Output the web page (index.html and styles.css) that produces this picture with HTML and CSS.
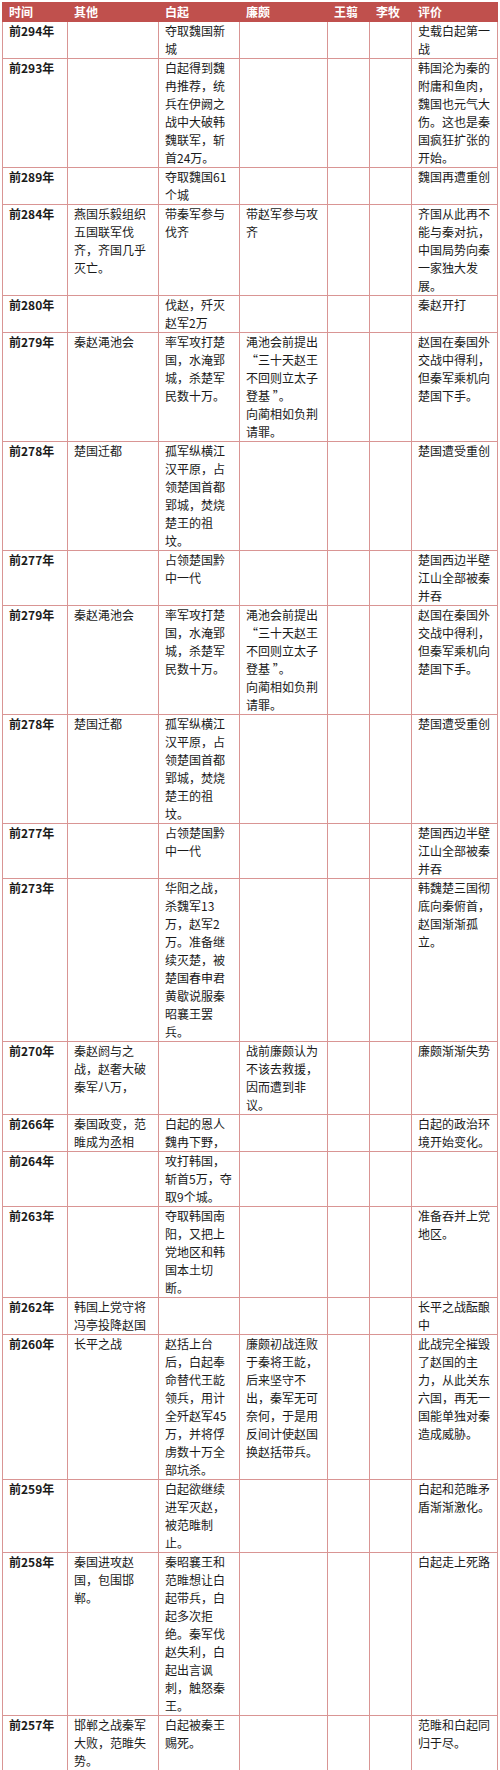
FILE: index.html
```html
<!DOCTYPE html>
<html lang="zh-CN">
<head>
<meta charset="utf-8">
<title>白起年表</title>
<link rel="stylesheet" href="styles.css">
</head>
<body>
<table class="chron">
  <colgroup>
    <col class="c-time">
    <col class="c-other">
    <col class="c-bai">
    <col class="c-lian">
    <col class="c-wang">
    <col class="c-li">
    <col class="c-eval">
  </colgroup>
  <thead>
    <tr>
      <th>时间</th><th>其他</th><th>白起</th><th>廉颇</th><th>王翦</th><th>李牧</th><th>评价</th>
    </tr>
  </thead>
  <tbody>
    <tr>
      <td class="year">前294年</td><td></td><td>夺取魏国新城</td><td></td><td></td><td></td><td>史载白起第一战</td>
    </tr>
    <tr>
      <td class="year">前293年</td><td></td><td>白起得到魏冉推荐，统兵在伊阙之战中大破韩魏联军，斩首24万。</td><td></td><td></td><td></td><td>韩国沦为秦的附庸和鱼肉，魏国也元气大伤。这也是秦国疯狂扩张的开始。</td>
    </tr>
    <tr>
      <td class="year">前289年</td><td></td><td>夺取魏国61个城</td><td></td><td></td><td></td><td>魏国再遭重创</td>
    </tr>
    <tr>
      <td class="year">前284年</td><td>燕国乐毅组织五国联军伐齐，齐国几乎灭亡。</td><td>带秦军参与伐齐</td><td>带赵军参与攻齐</td><td></td><td></td><td>齐国从此再不能与秦对抗，中国局势向秦一家独大发展。</td>
    </tr>
    <tr>
      <td class="year">前280年</td><td></td><td>伐赵，歼灭赵军2万</td><td></td><td></td><td></td><td>秦赵开打</td>
    </tr>
    <tr>
      <td class="year">前279年</td><td>秦赵渑池会</td><td>率军攻打楚国，水淹郢城，杀楚军民数十万。</td><td>渑池会前提出<br>“三十天赵王不回则立太子登基 ”。<br>向蔺相如负荆请罪。</td><td></td><td></td><td>赵国在秦国外交战中得利，但秦军乘机向楚国下手。</td>
    </tr>
    <tr>
      <td class="year">前278年</td><td>楚国迁都</td><td>孤军纵横江汉平原，占领楚国首都郢城，焚烧楚王的祖坟。</td><td></td><td></td><td></td><td>楚国遭受重创</td>
    </tr>
    <tr>
      <td class="year">前277年</td><td></td><td>占领楚国黔中一代</td><td></td><td></td><td></td><td>楚国西边半壁江山全部被秦并吞</td>
    </tr>
    <tr>
      <td class="year">前279年</td><td>秦赵渑池会</td><td>率军攻打楚国，水淹郢城，杀楚军民数十万。</td><td>渑池会前提出<br>“三十天赵王不回则立太子登基 ”。<br>向蔺相如负荆请罪。</td><td></td><td></td><td>赵国在秦国外交战中得利，但秦军乘机向楚国下手。</td>
    </tr>
    <tr>
      <td class="year">前278年</td><td>楚国迁都</td><td>孤军纵横江汉平原，占领楚国首都郢城，焚烧楚王的祖坟。</td><td></td><td></td><td></td><td>楚国遭受重创</td>
    </tr>
    <tr>
      <td class="year">前277年</td><td></td><td>占领楚国黔中一代</td><td></td><td></td><td></td><td>楚国西边半壁江山全部被秦并吞</td>
    </tr>
    <tr>
      <td class="year">前273年</td><td></td><td>华阳之战，杀魏军13万，赵军2万。准备继续灭楚，被楚国春申君黄歇说服秦昭襄王罢兵。</td><td></td><td></td><td></td><td>韩魏楚三国彻底向秦俯首，赵国渐渐孤立。</td>
    </tr>
    <tr>
      <td class="year">前270年</td><td>秦赵阏与之战，赵奢大破秦军八万，</td><td></td><td>战前廉颇认为不该去救援，因而遭到非议。</td><td></td><td></td><td>廉颇渐渐失势</td>
    </tr>
    <tr>
      <td class="year">前266年</td><td>秦国政变，范睢成为丞相</td><td>白起的恩人魏冉下野，</td><td></td><td></td><td></td><td>白起的政治环境开始变化。</td>
    </tr>
    <tr>
      <td class="year">前264年</td><td></td><td>攻打韩国，斩首5万，夺取9个城。</td><td></td><td></td><td></td><td></td>
    </tr>
    <tr>
      <td class="year">前263年</td><td></td><td>夺取韩国南阳，又把上党地区和韩国本土切断。</td><td></td><td></td><td></td><td>准备吞并上党地区。</td>
    </tr>
    <tr>
      <td class="year">前262年</td><td>韩国上党守将冯亭投降赵国</td><td></td><td></td><td></td><td></td><td>长平之战酝酿中</td>
    </tr>
    <tr>
      <td class="year">前260年</td><td>长平之战</td><td>赵括上台后，白起奉命替代王龁领兵，用计全歼赵军45万，并将俘虏数十万全部坑杀。</td><td>廉颇初战连败于秦将王龁，后来坚守不出，秦军无可奈何，于是用反间计使赵国换赵括带兵。</td><td></td><td></td><td>此战完全摧毁了赵国的主力，从此关东六国，再无一国能单独对秦造成威胁。</td>
    </tr>
    <tr>
      <td class="year">前259年</td><td></td><td>白起欲继续进军灭赵，被范睢制止。</td><td></td><td></td><td></td><td>白起和范睢矛盾渐渐激化。</td>
    </tr>
    <tr>
      <td class="year">前258年</td><td>秦国进攻赵国，包围邯郸。</td><td>秦昭襄王和范睢想让白起带兵，白起多次拒绝。秦军伐赵失利，白起出言讽刺，触怒秦王。</td><td></td><td></td><td></td><td>白起走上死路</td>
    </tr>
    <tr>
      <td class="year">前257年</td><td>邯郸之战秦军大败，范睢失势。</td><td>白起被秦王赐死。</td><td></td><td></td><td></td><td>范睢和白起同归于尽。</td>
    </tr>
  </tbody>
</table>
</body>
</html>
```

FILE: styles.css
```css
html, body {
  margin: 0;
  padding: 0;
  background: #ffffff;
}

body {
  padding: 2px 0 0 2px;
  font-family: "Noto Sans CJK SC", "Liberation Sans", sans-serif;
  font-size: 12px;
  color: #1a1a1a;
}

.chron {
  border-collapse: collapse;
  table-layout: fixed;
  width: 495px;
  border: 1px solid #d99594;
}

.c-time { width: 65px; }
.c-other { width: 91px; }
.c-bai { width: 81px; }
.c-lian { width: 88px; }
.c-wang { width: 42px; }
.c-li { width: 42px; }
.c-eval { width: 86px; }

.chron th,
.chron td {
  padding: 0 5px 0 6px;
  line-height: 18px;
  text-align: left;
  vertical-align: top;
  word-break: normal;
  line-break: strict;
}

.chron th {
  background: #c0504d;
  color: #ffffff;
  font-weight: bold;
  border: 1px solid #c0504d;
}

.chron td {
  border: 1px solid #d99594;
}

.chron td.year {
  font-weight: bold;
}
```
